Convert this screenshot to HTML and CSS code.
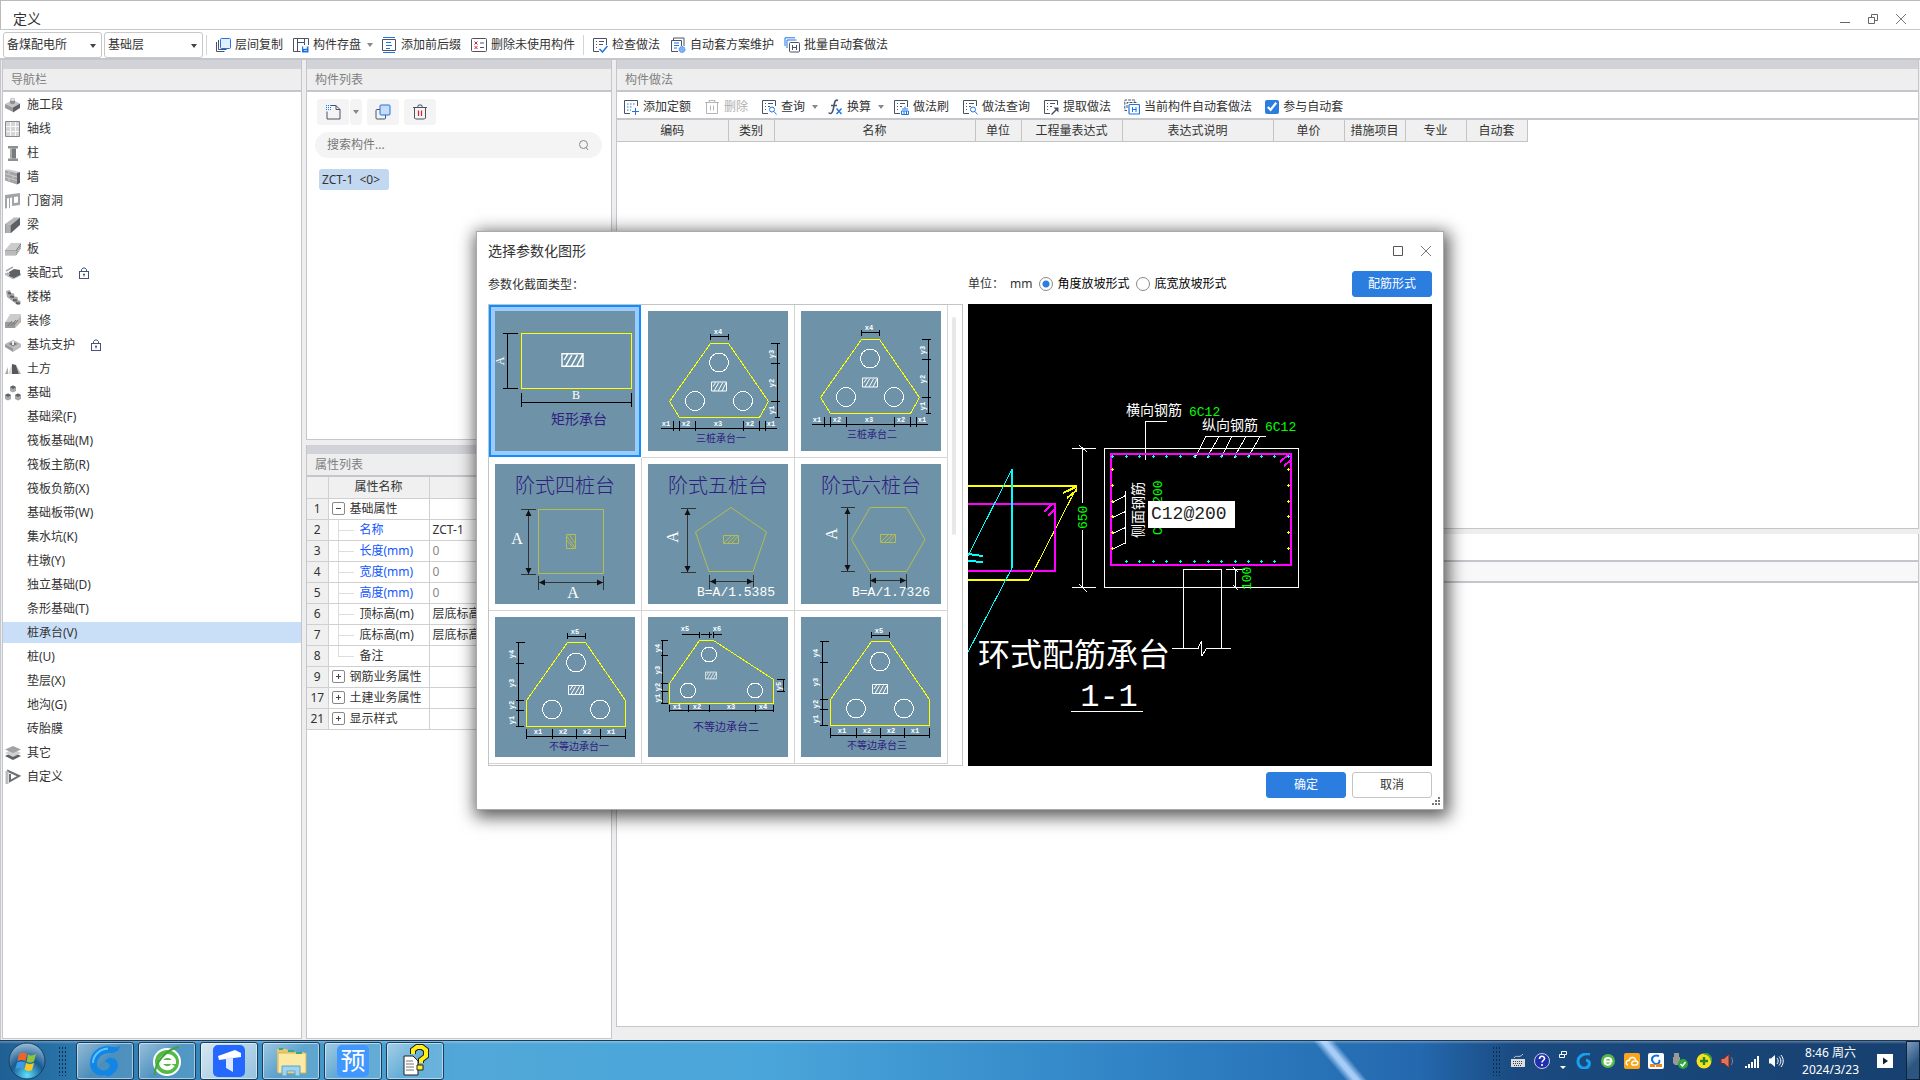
FILE: index.html
```
<!DOCTYPE html>
<html lang="zh-CN">

<head>
  <meta charset="UTF-8">
  <meta name="viewport" content="width=device-width, initial-scale=1.0">
  <title>定义</title>
  <link rel="stylesheet" href="styles.css">
</head>

<body>
  <!-- shared icons -->
  <svg class="sprite" aria-hidden="true">
    <symbol id="i-copy-floor" viewBox="0 0 16 16">
      <path d="M1.500 5v9.500h8M3.500 3v9.500h8" fill="none" stroke="#4a5268" />
      <rect x="5.500" y="1.500" width="10" height="10" rx="1" fill="#e3efff" stroke="#1f73e8" />
    </symbol>
    <symbol id="i-save" viewBox="0 0 16 16">
      <path d="M15.500 8V1.500H.5v13h7M4.500 1.500v13M4.500 5.500h7v-4M11.500 5.500V8" fill="none" stroke="#4a5268" />
      <path d="M9 9.500h6.500v6H9z" fill="#1f73e8" />
      <path d="M10.500 9.500h3v2h-3zM11 13.500h3" fill="#fff" stroke="#fff" stroke-width=".6" />
    </symbol>
    <symbol id="i-affix" viewBox="0 0 16 16">
      <path d="M2 .5h12M2 15.500h12M5 5.500h5M5 8.500h6M5 11.500h4" fill="none" stroke="#1f73e8" />
      <path d="M1.500 2.500h13v11h-13z" fill="none" stroke="#4a5268" />
    </symbol>
    <symbol id="i-del-unused" viewBox="0 0 16 16">
      <rect x=".5" y="1.500" width="15" height="13" rx="1" fill="none" stroke="#4a5268" />
      <path d="M3.500 4.500l3 3m0-3l-3 3M3.500 9l3 3m0-3l-3 3" stroke="#d8232a" />
      <path d="M9 6h4M9 10.500h4" stroke="#4a5268" />
    </symbol>
    <symbol id="i-check" viewBox="0 0 16 16">
      <path d="M7 14.500H1.500v-13h13V8" fill="none" stroke="#4a5268" />
      <path d="M4 4.500h1M7 4.500h5M4 7.500h1M7 7.500h4M4 10.500h1" stroke="#4a5268" />
      <path d="M7.500 12l3 3L15.500 9" fill="none" stroke="#1f73e8" stroke-width="1.500" />
    </symbol>
    <symbol id="i-scheme" viewBox="0 0 16 16">
      <path d="M3.500 3V1h10.500v8" fill="none" stroke="#4a5268" />
      <path d="M8 14.500H1.500v-11h10V9" fill="none" stroke="#4a5268" />
      <path d="M4 6h5M4 8.500h5M4 11h3" stroke="#1f73e8" />
      <circle cx="12" cy="12.500" r="3" fill="#7fb2f5" stroke="#1f73e8" stroke-dasharray="1 1" />
    </symbol>
    <symbol id="i-batch" viewBox="0 0 16 16">
      <path d="M1 9V.8h10M3 11V3h9.500" fill="none" stroke="#1f73e8" />
      <rect x="5.500" y="5.500" width="10" height="9.500" rx="1" fill="#fff" stroke="#4a5268" />
      <path d="M8.500 8v5M12.500 8v5M8.500 10.500h4" stroke="#4a5268" />
    </symbol>
    <symbol id="i-add" viewBox="0 0 16 16">
      <path d="M7 14.500H1.500v-13h13V7" fill="none" stroke="#4a5268" />
      <path d="M4 5h8M4 8h5M4 11h4" stroke="#1f73e8" stroke-dasharray="1.500 1.500" />
      <path d="M12.500 9v7M9 12.500h7" stroke="#1f73e8" />
    </symbol>
    <symbol id="i-trash-gray" viewBox="0 0 16 16">
      <path d="M1 3.500h14M5 3.500V1.500h6v2M2.500 3.500v11h11v-11M6.500 6.500v5M9.500 6.500v5" fill="none" stroke="#b5b5b5" />
    </symbol>
    <symbol id="i-query" viewBox="0 0 16 16">
      <path d="M7 14.500H1.500v-13h13V7" fill="none" stroke="#4a5268" />
      <path d="M4 4.500h1M7 4.500h5M4 7.500h1M7 7.500h2M4 10.500h1" stroke="#4a5268" />
      <circle cx="11" cy="10.500" r="2.500" fill="#fff" stroke="#1f73e8" />
      <path d="M13 12.500l2.500 3" stroke="#1f73e8" />
    </symbol>
    <symbol id="i-fx" viewBox="0 0 16 16">
      <path d="M11 1.500c-3-1.500-3.500 2-4 5s-1 8-3.500 8c-1 0-1.500-.5-1.500-1M4 6.500h6" fill="none" stroke="#4a5268" stroke-width="1.600" />
      <path d="M9.500 9.500l5 5.500m0-5.500l-5 5.500" stroke="#1f73e8" stroke-width="1.400" />
    </symbol>
    <symbol id="i-brush" viewBox="0 0 16 16">
      <path d="M7 14.500H1.500v-13h13V8" fill="none" stroke="#4a5268" />
      <path d="M4 4.500h1M7 4.500h5M4 7.500h1M7 7.500h2M4 10.500h1" stroke="#4a5268" />
      <path d="M12 7.500v2M9 10h6M8.500 15.500V12h7v3.500zM11 12v3.500M13.500 12v3.500" fill="none" stroke="#1f73e8" />
    </symbol>
    <symbol id="i-extract" viewBox="0 0 16 16">
      <path d="M7 14.500H1.500v-13h13V6" fill="none" stroke="#4a5268" />
      <path d="M4 4.500h1M7 4.500h5M4 7.500h1M7 7.500h2M4 10.500h1" stroke="#4a5268" />
      <path d="M8.500 15.500l5-5" stroke="#4a5268" stroke-width="1.500" />
      <path d="M10.500 8.500H15.500v5z" fill="#4a5268" />
    </symbol>
    <symbol id="i-auto" viewBox="0 0 16 16">
      <path d="M3 11.500H.8V1h10v2M3 9V3.500h10" fill="none" stroke="#4a5268" stroke-dasharray="3 1" />
      <rect x="5" y="5.500" width="10.500" height="9.500" rx="1" fill="#fff" stroke="#1f73e8" stroke-width="1.200" />
      <path d="M8.500 8v5M12 8v5M8.500 10.500h4" stroke="#1f73e8" />
    </symbol>
    <symbol id="i-new" viewBox="0 0 16 16">
      <path d="M6 1.500h5l4 4v9.500H2V7.500M11 1.500v4h4" fill="none" stroke="#4a5268" />
      <path d="M1 1.500h5M1 3.500h5M1 5.500h5" stroke="#1f73e8" stroke-dasharray="1 1" />
    </symbol>
    <symbol id="i-copy" viewBox="0 0 16 16">
      <rect x="1" y="5.500" width="9.500" height="9.500" rx="1" fill="none" stroke="#4a5268" />
      <rect x="5" y="1" width="10" height="10" rx="1" fill="#c6dcf7" stroke="#1f73e8" />
    </symbol>
    <symbol id="i-trash" viewBox="0 0 16 16">
      <path d="M1 3.500h14M5.500 3.500l1-2.500h3l1 2.500M2.500 3.500V14l1 1h9l1-1V3.500" fill="none" stroke="#4a5268" />
      <path d="M6.500 6.500v5.500M9.500 6.500v5.500" stroke="#d8232a" stroke-width="1.200" />
    </symbol>
    <symbol id="i-lock" viewBox="0 0 10 12">
      <path d="M2.500 4V2.500L4 1h2l1.500 1.500V4" fill="none" stroke="#47537a" />
      <rect x=".5" y="4.500" width="9" height="7" fill="none" stroke="#47537a" />
      <path d="M5 6.500v3M4 7.500h2" stroke="#47537a" />
    </symbol>
    <symbol id="hatch" viewBox="0 0 16 10">
      <path d="M.5.5h15v9H.5zM2 5l2.500-4M3 9.500l4.500-8M7 9.500l4.500-8M11 9.500l4-8" fill="none" stroke="#fff" />
    </symbol>

    <!-- cap with a cut triangle shape -->
    <symbol id="cap-three" viewBox="0 0 140 140">
      <path class="y" d="M62.500 32.500h18l40 58-9 16h-80l-10-16z" />
      <circle class="w" cx="71" cy="51.500" r="9.500" />
      <circle class="w" cx="47" cy="90" r="9.500" />
      <circle class="w" cx="95" cy="90" r="9.500" />
      <use href="#hatch" x="63" y="70" width="16" height="11" />
      <path class="k" d="M62.500 25.500h18M62.500 23v6M80.500 23v6M129.500 32v75M123 32.500h9M123 52.500h9M123 90.500h9M127 106.500h5M13 117.500h116M25.500 110v10M31.500 110v10M47.500 110v10M95.500 110v10M111.500 110v10M117.500 110v10" />
      <g class="dim">
        <text x="70" y="23">x4</text>
        <text x="18" y="115">x1</text>
        <text x="38" y="115">x2</text>
        <text x="70" y="115">x3</text>
        <text x="102" y="115">x2</text>
        <text x="123" y="115">x1</text>
        <text transform="translate(126 43) rotate(-90)">y3</text>
        <text transform="translate(126 72) rotate(-90)">y2</text>
        <text transform="translate(126 99) rotate(-90)">y1</text>
      </g>
    </symbol>

    <!-- cap with upright lower sides -->
    <symbol id="cap-uneven" viewBox="0 0 140 140">
      <path class="y" d="M72.500 25.500h18l40 58v26h-99v-26z" />
      <circle class="w" cx="81" cy="45.500" r="9.500" />
      <circle class="w" cx="57" cy="92.500" r="9.500" />
      <circle class="w" cx="105" cy="92.500" r="9.500" />
      <use href="#hatch" x="73" y="68" width="16" height="10" />
      <path class="k" d="M72.500 19.500h18M72.500 16v6M90.500 16v6M23.500 25v85M21 25.500h9M21 46.500h8M21 83.500h8M21 93.500h8M21 109.500h8M31 119.500h100M31.500 112v10M57.500 112v10M81.500 112v10M105.500 112v10M130.500 112v10" />
      <g class="dim">
        <text x="80" y="17">x5</text>
        <text x="43" y="117">x1</text>
        <text x="68" y="117">x2</text>
        <text x="92" y="117">x2</text>
        <text x="116" y="117">x1</text>
        <text transform="translate(19 37) rotate(-90)">y4</text>
        <text transform="translate(19 66) rotate(-90)">y3</text>
        <text transform="translate(19 88) rotate(-90)">y2</text>
        <text transform="translate(19 103) rotate(-90)">y1</text>
      </g>
    </symbol>
  </svg>

  <main class="window">
    <header class="titlebar">
      <h1>定义</h1>
      <div class="window-buttons">
        <button aria-label="最小化"><svg width="12" height="12"><path d="M1 9.500h10" stroke="#666" /></svg></button>
        <button aria-label="还原"><svg width="12" height="12"><path d="M1.500 4.500h6v6h-6zM4.500 4V1.500h6v6H8" fill="none" stroke="#666" /></svg></button>
        <button aria-label="关闭"><svg width="12" height="12"><path d="M1 1l10 10M11 1L1 11" stroke="#777" /></svg></button>
      </div>
    </header>

    <div class="toolbar main-toolbar">
      <span class="combo"><select aria-label="工程"><option>备煤配电所</option></select></span>
      <span class="combo"><select aria-label="楼层"><option>基础层</option></select></span>
      <i class="sep"></i>
      <button><svg class="icon"><use href="#i-copy-floor" /></svg>层间复制</button>
      <button><svg class="icon"><use href="#i-save" /></svg>构件存盘<i class="arrow"></i></button>
      <button><svg class="icon"><use href="#i-affix" /></svg>添加前后缀</button>
      <button><svg class="icon"><use href="#i-del-unused" /></svg>删除未使用构件</button>
      <i class="sep"></i>
      <button><svg class="icon"><use href="#i-check" /></svg>检查做法</button>
      <button><svg class="icon"><use href="#i-scheme" /></svg>自动套方案维护</button>
      <button><svg class="icon"><use href="#i-batch" /></svg>批量自动套做法</button>
    </div>

    <div class="workspace">
      <nav class="panel nav-panel">
        <h2>导航栏</h2>
        <ul class="tree">
          <li><a href="#"><svg class="icon"><path d="M0 7l8-4 7 3.500-7 4z" fill="#c4c4c4" /><path d="M0 7l8 3.500V15l-8-4z" fill="#9a9a9a" /><path d="M8 10.500l7-4V11l-7 4.500z" fill="#5d6064" /><path d="M5 3c0-3 5-3 5 0v3c-1 1.500-4 1.500-5 0z" fill="#8e8e8e" /><ellipse cx="7.500" cy="2.500" rx="2.500" ry="1.500" fill="#ddd" /></svg>施工段</a></li>
          <li><a href="#"><svg class="icon"><path d="M.5.5h14v15H.5z" fill="#d6d6d6" stroke="#888" /><path d="M5.500 1v14M10.500 1v14M1 5.500h13M1 10.500h13" stroke="#f7f7f7" /></svg>轴线</a></li>
          <li><a href="#"><svg class="icon"><path d="M3 1h10v2.500H3zM3 13.500h10V16H3z" fill="#8d9093" /><path d="M5 3.500h2v10H5z" fill="#aaa" /><path d="M7 3.500h4v10H7z" fill="#777b7f" /></svg>柱</a></li>
          <li><a href="#"><svg class="icon"><path d="M0 1l12 3v11.500L0 11.500z" fill="#a5a5a5" /><path d="M0 1l3-.8L15 3l-3 1z" fill="#ccc" /><path d="M12 4l3-1v11l-3 1.500z" fill="#5d6064" /><path d="M0 4.500L12 8M0 8l12 3.500M4 2v3M8 6.500v3M4 9v3" stroke="#d5d5d5" stroke-width=".8" /></svg>墙</a></li>
          <li><a href="#"><svg class="icon"><path d="M0 2l15-2v12l-8 1V4.500L5 5v10l-1 .5V5l-2 .5V15l-2 .8z" fill="#a2a4a6" /><path d="M9 4l4-.5v6L9 10z" fill="#fff" /></svg>门窗洞</a></li>
          <li><a href="#"><svg class="icon"><path d="M0 7L9 .5h6L6 8z" fill="#b9b9b9" /><path d="M0 7l6 1v8H0z" fill="#999" /><path d="M6 8l9-7.500V8l-9 8z" fill="#5d6064" /><path d="M2 8v8M4 8v8" stroke="#c5c5c5" /></svg>梁</a></li>
          <li><a href="#"><svg class="icon"><path d="M0 9l6-7h10l-5 7z" fill="#ccc" /><path d="M0 9h11v5.500H0z" fill="#a5a5a5" /><path d="M11 9l5-7v5l-5 7.500z" fill="#6b6e72" /><path d="M0 11h11l5-7M0 13h11l5-7" fill="none" stroke="#ddd" stroke-width=".8" /></svg>板</a></li>
          <li><a href="#"><svg class="icon"><path d="M0 10l8 4.500 8-4V8H0z" fill="#bbb" /><path d="M4 7l5-3 6 1v5l-6 3-5-2z" fill="#5d6064" /><path d="M1 6l7-4M2 8l3 1" stroke="#aaa" stroke-width="1.500" /></svg>装配式<svg class="lock"><use href="#i-lock" /></svg></a></li>
          <li><a href="#"><svg class="icon"><path d="M1 2l4-1 1 3 3 .5.500 3 3 .5.500 3 2.500 1v3l-3 1L2 8z" fill="#a8a8a8" /><path d="M3 4l3 .5M5 7.500l4 .5M8 11l4 .5M11 14l4 .5" stroke="#5d6064" stroke-width="1.800" /></svg>楼梯</a></li>
          <li><a href="#"><svg class="icon"><path d="M5 1h11v9H0z" fill="#ccc" /><path d="M0 9h10v6H0z" fill="#9a9a9a" /><path d="M10 9l6-6v6l-6 6z" fill="#b5b5b5" /><path d="M3 13l4-5M6 13l5-6M9 12l4-5" stroke="#777" /></svg>装修</a></li>
          <li><a href="#"><svg class="icon"><path d="M0 7l8-4 8 4-8 4z" fill="#b5b5b5" /><path d="M0 7l8 4v4l-8-5z" fill="#999" /><path d="M8 11l8-4v3l-8 5z" fill="#bbb" /><path d="M4 7l4-2 4 2-4 2z" fill="#6b6e72" /><path d="M8 4v4" stroke="#eee" stroke-width="2" /></svg>基坑支护<svg class="lock"><use href="#i-lock" /></svg></a></li>
          <li><a href="#"><svg class="icon"><path d="M7 3l4 1 3 9H7z" fill="#55585c" /><path d="M7 3L3 13h4z" fill="#ddd" /><path d="M0 13l3-7v7zM11 4l5 9h-2z" fill="#aaa" /></svg>土方</a></li>
          <li><a href="#"><svg class="icon"><path d="M5 2l3-1.500L11 2v4L8 7.500 5 6zM0 10l3-1.500L6 10v4l-3 1.500L0 14zM10 10l3-1.500 3 1.500v4l-3 1.500-3-1.500z" fill="#a5a7a9" /><path d="M5 2l3-1.500L11 2 8 4zM0 10l3-1.500L6 10l-3 2zM10 10l3-1.500 3 1.500-3 2z" fill="#5d6064" /></svg>基础</a></li>
          <li><a href="#"><i class="icon"></i>基础梁(F)</a></li>
          <li><a href="#"><i class="icon"></i>筏板基础(M)</a></li>
          <li><a href="#"><i class="icon"></i>筏板主筋(R)</a></li>
          <li><a href="#"><i class="icon"></i>筏板负筋(X)</a></li>
          <li><a href="#"><i class="icon"></i>基础板带(W)</a></li>
          <li><a href="#"><i class="icon"></i>集水坑(K)</a></li>
          <li><a href="#"><i class="icon"></i>柱墩(Y)</a></li>
          <li><a href="#"><i class="icon"></i>独立基础(D)</a></li>
          <li><a href="#"><i class="icon"></i>条形基础(T)</a></li>
          <li><a href="#" class="current"><i class="icon"></i>桩承台(V)</a></li>
          <li><a href="#"><i class="icon"></i>桩(U)</a></li>
          <li><a href="#"><i class="icon"></i>垫层(X)</a></li>
          <li><a href="#"><i class="icon"></i>地沟(G)</a></li>
          <li><a href="#"><i class="icon"></i>砖胎膜</a></li>
          <li><a href="#"><svg class="icon"><path d="M0 11l8-4 8 4-8 4z" fill="#5d6064" /><path d="M0 8l8-4 8 4-8 4z" fill="#d0d0d0" /><path d="M0 4.500L8 1l8 3.500L8 8z" fill="#a0a2a4" /></svg>其它</a></li>
          <li><a href="#"><svg class="icon"><path d="M2 1.500l12 5.500-9 5V5" fill="none" stroke="#6b6e72" stroke-width="2" /><path d="M2 2v13" stroke="#bbb" stroke-width="3" /></svg>自定义</a></li>
        </ul>
      </nav>

      <div class="column list-column">
        <section class="panel">
          <h2>构件列表</h2>
          <div class="list-tools">
            <span class="split">
              <button aria-label="新建"><svg class="icon"><use href="#i-new" /></svg></button>
              <button aria-label="新建选项" class="drop"><i class="arrow"></i></button>
            </span>
            <button aria-label="复制"><svg class="icon"><use href="#i-copy" /></svg></button>
            <button aria-label="删除"><svg class="icon"><use href="#i-trash" /></svg></button>
          </div>
          <div class="search">
            <input type="text" placeholder="搜索构件..." aria-label="搜索构件">
            <svg width="12" height="12"><circle cx="5.500" cy="5.500" r="4" fill="none" stroke="#888" /><path d="M8 8.500l2 2.500" stroke="#888" /></svg>
          </div>
          <button class="component">ZCT-1&nbsp; &lt;0&gt;</button>
        </section>

        <section class="panel">
          <h2>属性列表</h2>
          <table class="props">
            <thead>
              <tr><th class="num"></th><th class="name">属性名称</th><th>属性值</th></tr>
            </thead>
            <tbody>
              <tr><th>1</th><td><i class="toggle minus"></i>基础属性</td><td></td></tr>
              <tr class="key"><th>2</th><td class="sub">名称</td><td>ZCT-1</td></tr>
              <tr class="key"><th>3</th><td class="sub">长度(mm)</td><td class="auto">0</td></tr>
              <tr class="key"><th>4</th><td class="sub">宽度(mm)</td><td class="auto">0</td></tr>
              <tr class="key"><th>5</th><td class="sub">高度(mm)</td><td class="auto">0</td></tr>
              <tr><th>6</th><td class="sub">顶标高(m)</td><td>层底标高</td></tr>
              <tr><th>7</th><td class="sub">底标高(m)</td><td>层底标高</td></tr>
              <tr><th>8</th><td class="sub last">备注</td><td></td></tr>
              <tr><th>9</th><td><i class="toggle"></i>钢筋业务属性</td><td></td></tr>
              <tr><th>17</th><td><i class="toggle"></i>土建业务属性</td><td></td></tr>
              <tr><th>21</th><td><i class="toggle"></i>显示样式</td><td></td></tr>
            </tbody>
          </table>
        </section>
      </div>

      <div class="column method-column">
        <section class="panel">
          <h2>构件做法</h2>
          <div class="toolbar method-toolbar">
            <button><svg class="icon"><use href="#i-add" /></svg>添加定额</button>
            <button disabled><svg class="icon"><use href="#i-trash-gray" /></svg>删除</button>
            <button><svg class="icon"><use href="#i-query" /></svg>查询<i class="arrow"></i></button>
            <button><svg class="icon"><use href="#i-fx" /></svg>换算<i class="arrow"></i></button>
            <button><svg class="icon"><use href="#i-brush" /></svg>做法刷</button>
            <button><svg class="icon"><use href="#i-query" /></svg>做法查询</button>
            <button><svg class="icon"><use href="#i-extract" /></svg>提取做法</button>
            <button><svg class="icon"><use href="#i-auto" /></svg>当前构件自动套做法</button>
            <label><input type="checkbox" checked>参与自动套</label>
          </div>
          <table class="methods">
            <colgroup>
              <col style="width: 111px"><col style="width: 46px"><col style="width: 201px"><col style="width: 46px"><col style="width: 101px">
              <col style="width: 151px"><col style="width: 71px"><col style="width: 61px"><col style="width: 61px"><col style="width: 61px">
            </colgroup>
            <thead>
              <tr>
                <th>编码</th><th>类别</th><th>名称</th><th>单位</th><th>工程量表达式</th>
                <th>表达式说明</th><th>单价</th><th>措施项目</th><th>专业</th><th>自动套</th>
              </tr>
            </thead>
          </table>
        </section>
        <section class="panel detail-panel">
          <div class="detail-tabs"></div>
          <div class="detail-head"></div>
        </section>
      </div>
    </div>

    <div class="overlay">
      <section class="dialog" role="dialog" aria-labelledby="dialog-title">
        <header>
          <h2 id="dialog-title">选择参数化图形</h2>
          <div class="window-buttons">
            <button aria-label="最大化"><svg width="12" height="12"><path d="M1.500 1.500h9v9h-9z" fill="none" stroke="#555" /></svg></button>
            <button aria-label="关闭"><svg width="12" height="12"><path d="M1 1l10 10M11 1L1 11" stroke="#777" /></svg></button>
          </div>
        </header>

        <div class="dialog-body">
          <p class="caption">参数化截面类型：</p>
          <div class="options">
            <span>单位：</span>
            <span class="unit">mm</span>
            <label><input type="radio" name="slope" checked>角度放坡形式</label>
            <label><input type="radio" name="slope">底宽放坡形式</label>
            <button class="primary">配筋形式</button>
          </div>

          <div class="gallery">
            <div class="thumbs">
              <button class="selected" aria-label="矩形承台">
                <svg width="140" height="140">
                  <path class="y" d="M26.500 22.500h110v55h-110z" />
                  <use href="#hatch" x="66" y="42" width="23" height="14" />
                  <path class="k" d="M12.500 22v56M8 22.500h15M8 77.500h15M26.500 82v14M136.500 82v14M26 91.500h111" />
                  <g class="mark"><text x="81" y="88">B</text><text transform="translate(9 50) rotate(-90)">A</text></g>
                  <text class="caption-14" x="56" y="113">矩形承台</text>
                </svg>
              </button>
              <button aria-label="三桩承台一">
                <svg width="140" height="140">
                  <use href="#cap-three" width="140" height="140" />
                  <text class="caption-10" x="48" y="131">三桩承台一</text>
                </svg>
              </button>
              <button aria-label="三桩承台二">
                <svg width="140" height="140">
                  <use href="#cap-three" x="-2" y="-4" width="140" height="140" />
                  <text class="caption-10" x="46" y="127">三桩承台二</text>
                </svg>
              </button>
              <button aria-label="阶式四桩台">
                <svg width="140" height="140">
                  <text class="caption-20" x="70" y="29">阶式四桩台</text>
                  <path class="o" d="M43.500 45.500h65v64h-65zM71.500 70.500h9v14h-9zM71.500 72l9 12M71.500 76l7 8M74 70.500l6.500 9" />
                  <path class="d" d="M33.500 46v64M26 45.500h15M26 110h15M43.500 112v14M108.500 112v14M44 118.500h64" />
                  <path d="M33.500 46l3 6h-6zM33.500 110l3-6h-6zM44 118.500l6-3v6zM108 118.500l-6-3v6z" fill="#111" />
                  <g class="big-mark"><text x="22" y="80">A</text><text x="78" y="134">A</text></g>
                </svg>
              </button>
              <button aria-label="阶式五桩台">
                <svg width="140" height="140">
                  <text class="caption-20" x="70" y="29">阶式五桩台</text>
                  <path class="o" d="M83 43.500l35.500 24.500-13.500 39.500H61L47.500 68zM75.500 71.500h15v8h-15zM76 79l7-7M80 79l7-7M84 79l6-7" />
                  <path class="d" d="M39.500 45v63M33 44.500h15M33 108.500h15M61.500 111v14M105.500 111v14M61 117.500h44" />
                  <path d="M39.500 45l3 6h-6zM39.500 108l3-6h-6zM62 117.500l6-3v6zM105 117.500l-6-3v6z" fill="#111" />
                  <g class="big-mark"><text transform="translate(30 73) rotate(-90)">A</text></g>
                  <text class="formula" x="49" y="132">B=A/1.5385</text>
                </svg>
              </button>
              <button aria-label="阶式六桩台">
                <svg width="140" height="140">
                  <text class="caption-20" x="70" y="29">阶式六桩台</text>
                  <path class="o" d="M69 43.500h36.500L124 75.500l-18.500 32H69l-18.500-32zM79.500 70.500h15v8h-15zM80 78l7-7M84 78l7-7M88 78l6-7" />
                  <path class="d" d="M46.500 44v63M40 43.500h14M40 107.500h14M69.500 110v14M105.500 110v14M69 116.500h36" />
                  <path d="M46.500 44l3 6h-6zM46.500 107l3-6h-6zM69 116.500l6-3v6zM105 116.500l-6-3v6z" fill="#111" />
                  <g class="big-mark"><text transform="translate(36 70) rotate(-90)">A</text></g>
                  <text class="formula" x="51" y="132">B=A/1.7326</text>
                </svg>
              </button>
              <button aria-label="不等边承台一">
                <svg width="140" height="140">
                  <use href="#cap-uneven" width="140" height="140" />
                  <text class="caption-10" x="54" y="133">不等边承台一</text>
                </svg>
              </button>
              <button aria-label="不等边承台二">
                <svg width="140" height="140">
                  <path class="y" d="M51.500 23.500h14l60 39v24h-104v-20z" />
                  <circle class="w" cx="61" cy="37.500" r="7.500" />
                  <circle class="w" cx="40" cy="73.500" r="7.500" />
                  <circle class="w" cx="107" cy="73.500" r="7.500" />
                  <use href="#hatch" x="57" y="54" width="12" height="9" />
                  <path class="k" d="M34 17.500h17M53 17.500h11M65 17.500h9M51.500 15v6M61.500 15v6M65.500 15v6M14.500 23v64M13 23.500h7M13 38.500h7M13 66.500h7M13 74.500h7M13 86.500h7M135.500 62v13M129 62.500h8M129 74.500h8M21 93.500h105M21.500 88v7M40.500 88v7M61.500 88v7M107.500 88v7M125.500 88v7" />
                  <g class="dim">
                    <text x="37" y="14">x5</text><text x="69" y="14">x6</text>
                    <text x="29" y="92">x1</text><text x="49" y="92">x2</text><text x="83" y="92">x3</text><text x="115" y="92">x4</text>
                    <text transform="translate(12 31) rotate(-90)">y4</text>
                    <text transform="translate(12 53) rotate(-90)">y3</text>
                    <text transform="translate(12 70) rotate(-90)">y2</text>
                    <text transform="translate(12 81) rotate(-90)">y1</text>
                    <text transform="translate(133 69) rotate(-90)">y5</text>
                  </g>
                  <text class="caption-11" x="45" y="114">不等边承台二</text>
                </svg>
              </button>
              <button aria-label="不等边承台三">
                <svg width="140" height="140">
                  <use href="#cap-uneven" x="-2" y="-1" width="140" height="140" />
                  <text class="caption-10" x="46" y="132">不等边承台三</text>
                </svg>
              </button>
            </div>
            <i class="scroll-thumb"></i>
          </div>

          <div class="canvas">
            <svg width="464" height="462">
              <g fill="none" stroke="#fff" shape-rendering="crispEdges">
                <path d="M136.500 144.500h194v139h-194z" />
                <path d="M114.500 144v55M114.500 226v58M104 144.500h24M104 283.500h24M111 141l8 7M111 280l8 8" />
                <path d="M198.500 117.500h-21v38" />
                <path d="M298 132.500h-60l-11 21M251 132.500l-12 21M264 132.500l-11 21M278 132.500l-12 21M292 132.500l-12 21" />
                <path d="M157.500 187v52l-13 6M157.500 191.500l-13 7M157.500 207.500l-13 6M157.500 223.500l-13 6" />
                <path d="M215.500 345v-79.500h38V345M204 344.500h26l3.500-7.500.5 15 4.500-7.500h24" />
                <path d="M258 265.500h19M267.500 266v17M265 263l5 5M265 281l5 5" />
                <path d="M103 407.500h72" />
              </g>
              <g fill="none" stroke-width="2" shape-rendering="crispEdges">
                <path d="M0 182h109M0 276h61M95 189l13-6M99 194l10-8" stroke="#ff0" />
                <path d="M109 183l-48 93" stroke="#ff0" stroke-width="1" />
                <path d="M0 200h87v67H0M76 208l7-7M80 212l7-7M143 150h180v111H143zM312 158l9-8M316 162l7-6" stroke="#f0f" />
                <path d="M44 165v99M0 250l15 2M0 257l15 1" stroke="#0ff" />
                <path d="M44 165L0 252M44 264L0 348" stroke="#0ff" stroke-width="1" />
              </g>
              <g id="dots"></g>
              <g class="cad">
                <text x="158" y="111">横向钢筋</text>
                <text x="234" y="126">纵向钢筋</text>
                <text transform="translate(175 234) rotate(-90)">侧面钢筋</text>
              </g>
              <g class="cad-value">
                <text x="221" y="112">6C12</text>
                <text x="297" y="127">6C12</text>
                <text transform="translate(119 225) rotate(-90)">650</text>
                <text transform="translate(194 231) rotate(-90)">C12@200</text>
                <text transform="translate(283 286) rotate(-90)">100</text>
              </g>
              <text class="cad-title" x="10" y="362">环式配筋承台</text>
              <text class="cad-section" x="141" y="402">1-1</text>
            </svg>
            <input type="text" value="C12@200" aria-label="侧面钢筋">
          </div>
        </div>

        <footer>
          <button class="primary">确定</button>
          <button>取消</button>
        </footer>
        <svg class="grip" width="9" height="9"><path d="M6 1h2M3 4h2M6 4h2M0 7h2M3 7h2M6 7h2" stroke="#777" stroke-width="2" /></svg>
      </section>
    </div>
  </main>

  <footer class="taskbar">
    <button class="start" aria-label="开始">
      <svg width="38" height="38">
        <defs>
          <radialGradient id="orb" cx=".5" cy=".9" r=".9">
            <stop offset="0" stop-color="#5fe0ff" /><stop offset=".5" stop-color="#175a90" /><stop offset="1" stop-color="#9cc0d8" />
          </radialGradient>
        </defs>
        <circle cx="19" cy="19" r="18" fill="url(#orb)" stroke="#1a3f60" />
        <path d="M11 12c3-2 5-1.500 8 0l-1.500 7c-3-1.500-5-1.500-8 0z" fill="#f0642a" />
        <path d="M20 12.500c3 1.500 5 1 8-.5l-2 7.500c-3 1.500-5 1.500-7.500 0z" fill="#8cc43c" />
        <path d="M9 20.500c3-1.500 5-1.500 8 0L15.500 27c-3-1.500-5-1.500-8 0z" fill="#3c9be8" />
        <path d="M18 21c3 1.500 5 1.500 8 0l-2 7c-3 1.500-5 1-7.500-.5z" fill="#fcc81e" />
      </svg>
    </button>
    <i class="dots"></i>
    <div class="tasks">
      <button aria-label="广联达"><svg width="34" height="34"><path d="M32 2c-1 5-5 7-9 7-8-1-15 5-14 13 2 5 9 6 12 2 2-3 0-6-4-6 1-4 7-6 11-2 4 5 1 12-4 14-1 3-5 3-7 1C8 33 2 27 2 19 2 9 10 2 20 2c5 1 8 2 12 0z" fill="#1286e6" /><path d="M20 4.500C11 5 5 12 5 19" fill="none" stroke="#5fc4ff" stroke-width="2" /></svg></button>
      <button aria-label="浏览器"><svg width="34" height="34"><circle cx="17" cy="18" r="13" fill="#55b948" stroke="#fff" stroke-width="2" /><path d="M10 18h14c0-8-13-8-13 0 0 7 9 8 12 3" fill="none" stroke="#fff" stroke-width="4" /><path d="M5 31C4 20 16 5 29 3" fill="none" stroke="#3fa535" stroke-width="2" /></svg></button>
      <button aria-label="算量" class="active"><svg width="34" height="34"><rect x="1" y="1" width="32" height="32" rx="5" fill="#2468ff" /><path d="M6 12l17-6 6 3v4L7 16z" fill="#fff" /><path d="M14 14l7-1v15l-7-4z" fill="#dce8ff" /></svg></button>
      <button aria-label="资源管理器"><svg width="34" height="34"><path d="M3 5h10l2 3h15v20H3z" fill="#e9c86a" /><path d="M4 9h28v20H4z" fill="#fbe9a6" stroke="#d8b45a" /><path d="M5 5h4M14 7h6M22 9h6" stroke="#3a8" stroke-width="2" /><path d="M8 32V22h18v10h-5v-5h-8v5z" fill="#9fd4ee" stroke="#5a9fc4" /></svg></button>
      <button aria-label="预算"><span class="yu">预</span></button>
      <button aria-label="帮助"><svg width="34" height="34"><path d="M6 12h9l5 5v14H6z" fill="#fff" stroke="#222" /><path d="M8 17h7M8 20h8M8 23h8M8 26h8" stroke="#777" /><path d="M15 10V6l4-3h5l4 3v6l-5 4v3" fill="none" stroke="#222" stroke-width="6" /><path d="M15 10V6l4-3h5l4 3v6l-5 4v3" fill="none" stroke="#ffee1a" stroke-width="4" /><path d="M19 21h6v5h-6z" fill="#ffee1a" stroke="#222" /></svg></button>
    </div>

    <div class="tray">
      <i class="dots"></i>
      <svg width="16" height="16"><path d="M1 6h14v8H1z" fill="#ddd" /><path d="M3 8.500h10M3 10.500h10M4 12.500h8" stroke="#345" stroke-dasharray="1 1" /><path d="M4 5c2-4 5 1 9-4" fill="none" stroke="#ccc" /></svg>
      <svg width="16" height="16"><circle cx="8" cy="8" r="7.500" fill="#1f2fae" stroke="#ccd" /><path d="M5.500 6c0-3.500 5-3.500 5-.5 0 2-2.500 2-2.500 4M8 11v2" fill="none" stroke="#fff" stroke-width="1.600" /></svg>
      <svg width="10" height="22"><path d="M1.500 4.500h5v3h-5zM3.500 4V1.500h5v3H7" fill="none" stroke="#fff" /><path d="M2 16h6l-3 3z" fill="#fff" /></svg>
      <svg width="16" height="16"><path d="M14 1C8 0 2 3 2 8.500 2 13 6 16 9.500 15 14 14 15 8 10 7" fill="none" stroke="#18a0f0" stroke-width="3" /></svg>
      <svg width="16" height="16"><circle cx="8" cy="8" r="7" fill="#55b948" /><path d="M4.500 8.500h7c0-5-7-4.500-7 0 0 4 5 4 6.500 1.500" fill="none" stroke="#fff" stroke-width="2" /></svg>
      <svg width="16" height="16"><rect width="16" height="16" rx="2" fill="#f9a51a" /><path d="M4 12c-3-1-2-5 1-4.500C6 3 12 4 11.500 8c3 0 3 4 0 4H9c-2 0-2-4 2-4" fill="none" stroke="#fff" stroke-width="1.500" /></svg>
      <svg width="16" height="16"><rect width="16" height="16" rx="2" fill="#fff" /><path d="M11 3C6 1 2 5 5 9s8 1 6-2" fill="none" stroke="#1274e0" stroke-width="2" /><path d="M2 11h5v3H2zM8 11h6v3H8z" fill="#f08a1c" /></svg>
      <svg width="16" height="18"><path d="M2 1h5v4h1v6l-2 2H3l-2-2V5h1z" fill="#999" /><circle cx="11" cy="12" r="5" fill="#2fa63a" /><path d="M8.500 12l2 2 3-4" fill="none" stroke="#fff" stroke-width="1.500" /></svg>
      <svg width="16" height="16"><circle cx="8" cy="8" r="7.500" fill="#f5e11c" /><path d="M8 .5A7.500 7.500 0 0 1 15.500 8" fill="none" stroke="#3fa535" stroke-width="2" /><path d="M8 4v8M4 8h8" stroke="#26862c" stroke-width="2.400" /></svg>
      <svg width="16" height="16"><path d="M1 5.500h3L9 1v14l-5-4.500H1z" fill="#e0745c" stroke="#7c2a1c" /><path d="M11 4c2 2 2 6 0 8" fill="none" stroke="#888" /></svg>
      <svg width="16" height="16"><path d="M2 15v-2M5 15v-4M8 15V9M11 15V6M14 15V3" stroke="#fff" stroke-width="2" /></svg>
      <svg width="16" height="16"><path d="M1 5.500h2L7 2v12l-4-3.500H1z" fill="#fff" /><path d="M9 5c1.500 2 1.500 4 0 6M11 3.500c2.500 3 2.500 6 0 9M13 2c3 4 3 8 0 12" fill="none" stroke="#fff" /></svg>
      <time datetime="2024-03-23T08:46">8:46 周六<br>2024/3/23</time>
      <svg width="16" height="16"><rect y="1" width="16" height="14" fill="#fff" /><path d="M6 4.500L11 8l-5 3.500z" fill="#0b1c33" /></svg>
      <button class="desktop" aria-label="显示桌面"></button>
    </div>
  </footer>

  <script>
    // rebar points in the section
    const dots = document.getElementById('dots');
    const topX = [144, 158, 171, 185, 198, 212, 226, 240, 253, 267, 280, 293, 306, 320];
    const sideY = [165, 181, 197, 212, 228, 244];

    function addDot(x, y, color) {
      const p = document.createElementNS('http://www.w3.org/2000/svg', 'path');
      p.setAttribute('d', `M${x - 1} ${y + .5}h3M${x + .5} ${y - 1}v3`);
      p.setAttribute('stroke', color);
      dots.appendChild(p);
    }

    topX.forEach(x => addDot(x, 152, '#0ff'));
    topX.slice(1, -1).forEach(x => addDot(x, 257, '#0ff'));
    sideY.forEach(y => {
      addDot(144, y, '#ff0');
      addDot(320, y, '#ff0');
    });
  </script>
</body>

</html>
```
FILE: styles.css
```
* {
  box-sizing: border-box;
}

body {
  margin: 0;
  height: 100vh;
  display: flex;
  flex-direction: column;
  overflow: hidden;
  font: 12px/18px "Noto Sans", "Noto Sans CJK SC", sans-serif;
  color: #333;
  background-color: #fff;
}

h1,
h2,
p,
ul {
  margin: 0;
  padding: 0;
  font-weight: normal;
}

button,
input,
select {
  font: inherit;
  color: inherit;
  margin: 0;
}

button {
  padding: 0;
  border: none;
  background: none;
  white-space: nowrap;
}

svg {
  display: block;
}

.sprite {
  display: none;
}

.icon {
  width: 16px;
  height: 16px;
  flex: none;
}

.arrow {
  width: 0;
  height: 0;
  border: 3px solid transparent;
  border-top: 4px solid #888;
  border-bottom: 0;
}

/* main window */

.window {
  position: relative;
  flex: 1;
  min-height: 0;
  display: flex;
  flex-direction: column;
  border-top: 1px solid #bbb;
}

.titlebar {
  height: 29px;
  display: flex;
  justify-content: space-between;
  align-items: flex-end;
  padding: 0 13px 0 12px;
  border-left: 1px solid #bbb;
  border-bottom: 1px solid #c4c6cc;
}

.titlebar h1 {
  font-size: 14px;
  line-height: 20px;
}

.window-buttons {
  display: flex;
  gap: 16px;
  padding-bottom: 4px;
}

.toolbar {
  display: flex;
  align-items: center;
}

.toolbar button {
  display: flex;
  align-items: center;
  gap: 4px;
}

.toolbar button:disabled {
  color: #b0b0b0;
}

.main-toolbar {
  height: 30px;
  gap: 10px;
  padding: 1px 0 0 3px;
  border-bottom: 2px solid #c4c6cc;
}

.combo {
  position: relative;
  width: 99px;
  margin-right: -8px;
}

.combo::after {
  content: "";
  position: absolute;
  right: 6px;
  top: 12px;
  border: 3px solid transparent;
  border-top: 4px solid #444;
  border-bottom: 0;
}

.combo select {
  display: block;
  width: 100%;
  height: 26px;
  padding: 0 3px;
  border: 1px solid #c8c8c8;
  border-radius: 3px;
  background-color: #fff;
  appearance: none;
}

.sep {
  width: 1px;
  height: 20px;
  margin: 0 -2px;
  background-color: #d5d5d5;
}

.combo + .sep {
  margin-left: 1px;
}

.main-toolbar .arrow {
  margin: 0 -2px 0 2px;
}

.workspace {
  flex: 1;
  min-height: 0;
  display: flex;
  gap: 4px;
  padding: 0 1px 1px 1px;
  border-left: 1px solid #c4c6cc;
  background-color: #eee;
}

.panel {
  border: 1px solid #c4c6cc;
  border-top: 0;
  background-color: #fff;
  min-width: 0;
  overflow: hidden;
}

.panel h2 {
  height: 32px;
  padding-left: 8px;
  border-top: 9px solid #d2d3d9;
  border-bottom: 2px solid #c4c6cc;
  background-color: #eee;
  font-size: 12px;
  line-height: 22px;
  color: #808080;
}

.nav-panel {
  flex: none;
  width: 300px;
}

.column {
  display: grid;
  gap: 5px;
}

.list-column {
  flex: none;
  width: 306px;
  grid-template-rows: 380px 1fr;
}

.method-column {
  flex: 1;
  min-width: 0;
  grid-template-rows: 469px 1fr;
}

/* navigation tree */

.tree {
  list-style: none;
  padding-top: 1px;
}

.tree li {
  padding: 1px 0 2px;
}

.tree a {
  display: flex;
  align-items: center;
  gap: 6px;
  height: 21px;
  padding-left: 2px;
  color: inherit;
  text-decoration: none;
}

.tree .lock {
  width: 10px;
  height: 12px;
  margin-left: 10px;
}

.tree .current {
  background-color: #c9dff8;
}

/* component list */

.list-tools {
  display: flex;
  gap: 5px;
  padding: 7px 10px;
}

.list-tools button {
  display: flex;
  justify-content: center;
  align-items: center;
  width: 32px;
  height: 26px;
  border-radius: 3px;
  background-color: #f4f4f4;
}

.list-tools .split {
  display: flex;
  gap: 1px;
}

.list-tools .drop {
  width: 12px;
}

.search {
  display: flex;
  align-items: center;
  height: 26px;
  margin: 0 9px 0 8px;
  padding: 0 12px;
  border-radius: 13px;
  background-color: #f4f4f4;
}

.search input {
  flex: 1;
  min-width: 0;
  padding: 0;
  border: none;
  outline: none;
  background: none;
}

.search input::placeholder {
  color: #777;
}

.component {
  min-width: 70px;
  height: 21px;
  margin: 11px 12px;
  padding: 0 4px 0 3px;
  border-radius: 3px;
  text-align: left;
  background-color: #c1d8f0;
}

/* property table */

.props {
  width: 100%;
  table-layout: fixed;
  border-collapse: collapse;
}

.props th,
.props td {
  height: 21px;
  padding: 0 3px;
  border-right: 1px solid #d0d0d0;
  border-bottom: 1px solid #d0d0d0;
  font-weight: normal;
  text-align: left;
  white-space: nowrap;
}

.props th {
  padding: 0;
  text-align: center;
  background-color: #f0f0f0;
}

.props .num {
  width: 21px;
}

.props .name {
  width: 101px;
}

.props .sub {
  padding-left: 31px;
  background:
    linear-gradient(#ddd, #ddd) 9px 10px / 16px 1px no-repeat,
    linear-gradient(#ddd, #ddd) 9px 0 / 1px 100% no-repeat;
}

.props .last {
  background-size: 16px 1px, 1px 10px;
}

.props .key .sub {
  color: #1257ff;
}

.props .auto {
  color: #888;
}

.toggle {
  display: inline-block;
  width: 13px;
  height: 13px;
  margin-right: 5px;
  border: 1px solid #888;
  border-radius: 2px;
  vertical-align: -2px;
  background:
    linear-gradient(#444, #444) center / 5px 1px no-repeat,
    linear-gradient(#444, #444) center / 1px 5px no-repeat;
}

.toggle.minus {
  background-size: 5px 1px, 0 0;
}

/* method table */

.method-toolbar {
  height: 28px;
  gap: 13px;
  padding: 3px 0 0 6px;
  border-bottom: 2px solid #c4c6cc;
}

.method-toolbar .arrow {
  margin: 0 -4px 0 3px;
}

.method-toolbar label {
  display: flex;
  align-items: center;
  gap: 4px;
}

input[type="checkbox"] {
  width: 14px;
  height: 14px;
  accent-color: #2b7de0;
}

.methods {
  width: 910px;
  table-layout: fixed;
  border-collapse: collapse;
}

.methods th {
  height: 21px;
  padding: 1px 0 0;
  border-right: 1px solid #c4c4c4;
  border-bottom: 1px solid #c4c4c4;
  background-color: #f0f0f0;
  font-weight: normal;
  white-space: nowrap;
}

.detail-panel {
  margin-bottom: 12px;
}

.detail-tabs {
  height: 28px;
  border-bottom: 2px solid #c4c6cc;
}

.detail-head {
  height: 21px;
  border-bottom: 2px solid #c4c6cc;
  background-color: #f8f8f8;
}

/* dialog */

.overlay {
  position: absolute;
  inset: -1px 0 0;
  display: flex;
  justify-content: center;
  align-items: center;
}

.dialog {
  position: relative;
  width: 968px;
  padding: 0 11px 11px;
  border: 1px solid #aaa;
  background-color: #fff;
  box-shadow: 2px 4px 16px 3px rgba(0, 0, 0, 0.65);
}

.dialog header {
  display: flex;
  justify-content: space-between;
  align-items: center;
  height: 39px;
}

.dialog header h2 {
  font-size: 14px;
}

.dialog .window-buttons {
  padding: 0;
}

.dialog-body {
  display: grid;
  grid-template-columns: 475px 1fr;
  gap: 6px 5px;
}

.caption {
  line-height: 27px;
}

.options {
  display: flex;
  align-items: center;
  height: 26px;
}

.unit {
  margin: 0 7px 0 6px;
}

.options label {
  display: flex;
  align-items: center;
  gap: 4px;
  margin-right: 7px;
  color: #000;
}

.options input {
  width: 14px;
  height: 14px;
  border: 1px solid #888;
  border-radius: 50%;
  appearance: none;
}

.options input:checked {
  background: radial-gradient(circle, #2b7de0 3px, #fff 4px);
}

.options button,
.dialog footer button {
  width: 80px;
  height: 26px;
  border: 1px solid #c4c4c4;
  border-radius: 3px;
}

.options button {
  margin-left: auto;
}

.options .primary,
.dialog footer .primary {
  border-color: #2b7de0;
  background-color: #2b7de0;
  color: #fff;
}

.dialog footer {
  display: flex;
  justify-content: flex-end;
  gap: 6px;
  margin-top: 6px;
}

.grip {
  position: absolute;
  right: 2px;
  bottom: 3px;
}

.gallery {
  display: flex;
  height: 462px;
  border: 1px solid #c4c4c4;
  overflow: hidden;
}

.thumbs {
  display: grid;
  grid-template-columns: repeat(3, 153px);
  grid-auto-rows: 153px;
}

.thumbs button {
  display: flex;
  justify-content: center;
  align-items: center;
  border-right: 1px solid #d4d4d4;
  border-bottom: 1px solid #d4d4d4;
}

.thumbs svg {
  flex: none;
  background-color: #6e93a8;
}

.thumbs .selected {
  margin: 0 1px 1px 0;
  border: 2px solid #0f8fff;
  background-color: #9ccbff;
}

.scroll-thumb {
  width: 4px;
  height: 218px;
  margin: 12px 0 0 4px;
  border-radius: 2px;
  background-color: #e8e8e8;
}

/* drawing strokes */

.y,
.w,
.k,
.o,
.d {
  fill: none;
  stroke: #ff0;
  shape-rendering: crispEdges;
}

.w {
  stroke: #fff;
}

.k {
  stroke: #000;
}

.o {
  stroke: #b4bd4e;
  shape-rendering: auto;
}

.d {
  stroke: #333;
}

.dim {
  font: bold 7px "Liberation Mono", monospace;
  fill: #fff;
  text-anchor: middle;
}

.mark {
  font: 12px "Liberation Serif", serif;
  fill: #fff;
  text-anchor: middle;
}

.big-mark {
  font: 16px "Liberation Serif", serif;
  fill: #fff;
  text-anchor: middle;
}

.formula {
  font: 13px "Liberation Mono", monospace;
  fill: #fff;
}

.caption-10,
.caption-11,
.caption-14,
.caption-20 {
  font-size: 10px;
  fill: #2f2080;
}

.caption-11 {
  font-size: 11px;
}

.caption-14 {
  font-size: 14px;
}

.caption-20 {
  font-size: 20px;
  font-weight: 300;
  text-anchor: middle;
}

.canvas {
  position: relative;
  background-color: #000;
}

.canvas input {
  position: absolute;
  left: 180px;
  top: 197px;
  width: 87px;
  height: 27px;
  padding: 0 3px;
  border: none;
  font: 18px "Liberation Mono", monospace;
  color: #222;
  background-color: #fff;
}

.cad {
  font-size: 14px;
  fill: #fff;
}

.cad-value {
  font: 13px "Liberation Mono", monospace;
  fill: #0f0;
}

.cad-title {
  font-size: 32px;
  fill: #fff;
}

.cad-section {
  font: 32px "Liberation Mono", monospace;
  fill: #fff;
  text-anchor: middle;
}

/* taskbar */

.taskbar {
  flex: none;
  display: flex;
  align-items: center;
  height: 40px;
  padding-left: 8px;
  border-top: 1px solid #1d3a58;
  background:
    linear-gradient(rgba(255, 255, 255, 0.3), transparent 3px),
    linear-gradient(50deg, transparent 40%, rgba(180, 215, 255, 0.9) 48%, rgba(180, 215, 255, 0.9) 52%, transparent 60%) 1300px 0 / 80px 100% no-repeat,
    linear-gradient(90deg, #1f5f94, #2a78ae 4%, #51a8d8 24%, #4aa5da 40%, #2f82c4 60%, #2468ae 74%, #1a4a80 79%, #17406f);
}

.dots {
  width: 9px;
  height: 30px;
  background: radial-gradient(circle, #0c2c4a 1px, transparent 1px) 0 0 / 3px 4px;
}

.taskbar > .dots {
  margin: 0 9px 0 12px;
}

.tasks {
  display: flex;
  gap: 4px;
}

.tasks button {
  display: flex;
  justify-content: center;
  align-items: center;
  width: 58px;
  height: 38px;
  border: 1px solid #173c5c;
  border-radius: 3px;
  background: linear-gradient(135deg, rgba(255, 255, 255, 0.5), rgba(255, 255, 255, 0.15) 50%);
  box-shadow: inset 0 0 0 1px rgba(255, 255, 255, 0.5);
}

.tasks .active {
  background: linear-gradient(135deg, rgba(255, 255, 255, 0.8), rgba(255, 255, 255, 0.45));
}

.yu {
  width: 32px;
  height: 32px;
  border-radius: 5px;
  background-color: #3f97ff;
  font-size: 25px;
  line-height: 31px;
  color: #fff;
}

.tray {
  display: flex;
  align-items: center;
  gap: 8px;
  height: 100%;
  margin-left: auto;
  color: #fff;
}

.tray time {
  margin: 0 10px 0 10px;
  line-height: 17px;
  text-align: center;
}

.tray > .dots {
  margin-right: 1px;
}

.tray .desktop {
  width: 14px;
  height: 100%;
  margin-left: 5px;
  border: 1px solid #0c2440;
  background: linear-gradient(135deg, #7d9cbc, #2c5580 60%);
}
```
